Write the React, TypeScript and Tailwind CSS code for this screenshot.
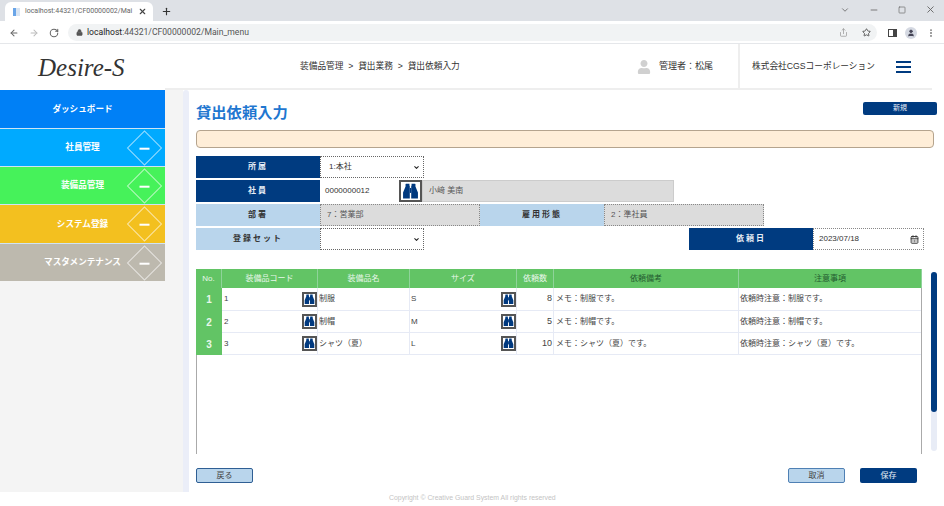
import React from 'react';
import { ArrowLeft, ArrowRight, ChevronDown, Lock, Minus, Plus, RotateCw, Share, Star, Square, X, MoreVertical, User, CalendarDays } from 'lucide-react';
import { FaUser } from 'react-icons/fa';

const font = "font-['Liberation_Sans','Noto_Sans_CJK_JP',sans-serif]";

const menus = [
  { label: 'ダッシュボード', color: 'bg-[#0080f6]', h: 'h-[38px]', toggle: false },
  { label: '社員管理', color: 'bg-[#00aaff]', h: 'h-[37px]', toggle: true },
  { label: '装備品管理', color: 'bg-[#46f25a]', h: 'h-[37px]', toggle: true },
  { label: 'システム登録', color: 'bg-[#f3c01f]', h: 'h-[38px]', toggle: true },
  { label: 'マスタメンテナンス', color: 'bg-[#bdb9ae]', h: 'h-[37px]', toggle: true },
];

const rows = [
  { no: 1, code: '1', name: '制服', size: 'S', qty: 8, memo: 'メモ：制服です。', note: '依頼時注意：制服です。', h: 'h-[23px]' },
  { no: 2, code: '2', name: '制帽', size: 'M', qty: 5, memo: 'メモ：制帽です。', note: '依頼時注意：制帽です。', h: 'h-[22px]' },
  { no: 3, code: '3', name: 'シャツ（夏）', size: 'L', qty: 10, memo: 'メモ：シャツ（夏）です。', note: '依頼時注意：シャツ（夏）です。', h: 'h-[22px]' },
];

const Finder = ({ large = false }: { large?: boolean }) => (
  <span className={`flex shrink-0 items-center justify-center border-2 border-[#555] bg-white text-[#00397f] ${large ? 'h-[22px] w-[23px]' : 'h-[15px] w-[15px]'}`}>
    <svg viewBox="0 0 24 24" width={large ? 17 : 11} height={large ? 17 : 11} fill="currentColor">
      <path d="M6 1h4.5v3H11v18H1.5V13.5L5 5V1.5z" />
      <path d="M18 1h-4.5v3H13v18h9.5V13.5L19 5V1.5z" />
      <rect x="11" y="7" width="2" height="7" />
    </svg>
  </span>
);

const Label = ({ text, dark = false }: { text: string; dark?: boolean }) => (
  <div className={`flex h-[22px] w-[124px] shrink-0 items-center justify-center text-[8px] font-bold tracking-[2px] ${dark ? 'bg-[#003b80] text-[#e8eef6]' : 'bg-[#b9d5ec] text-[#333]'}`}>
    {text}
  </div>
);

const SelectBox = ({ value }: { value?: string }) => (
  <div className="flex h-[22px] w-[104px] items-center justify-between border border-dotted border-[#666] bg-white pl-[8px] pr-[3px] text-[8px] text-[#333]">
    <span>{value}</span>
    <ChevronDown size={7} strokeWidth={3.5} className="text-[#222]" />
  </div>
);

const Gray = ({ text, w }: { text: string; w: string }) => (
  <div className={`flex h-[22px] ${w} items-center border border-dotted border-[#888] bg-[#dcdcdc] pl-[6px] text-[8px] text-[#555]`}>{text}</div>
);

const Th = ({ w, text, dark = false }: { w: string; text: string; dark?: boolean }) => (
  <div className={`flex ${w} shrink-0 items-center justify-center border-r border-[#8fd39a] text-[8px] ${dark ? 'text-[#245c30]' : 'text-[#e8f7ea]'}`}>{text}</div>
);

const App = () => {
  return (
    <div className={`${font} flex h-[506px] w-[944px] flex-col overflow-hidden bg-white`}>
      {/* browser chrome */}
      <div className="flex h-[21px] items-end bg-[#dee1e6] pl-[5px] text-[#555]">
        <div className="flex h-[19px] w-[148px] items-center gap-[5px] rounded-t-[6px] bg-white pl-[8px] pr-[6px] text-[7px] text-[#666]">
          <span className="h-[8px] w-[7px] shrink-0 border-l-[3px] border-[#6aa5e8] bg-[#d9e5f3]" />
          <span className="flex-1 whitespace-nowrap font-['Roboto',sans-serif]">localhost:44321/CF00000002/Mai</span>
          <X size={9} strokeWidth={3} className="shrink-0 text-[#444]" />
        </div>
        <Plus size={11} strokeWidth={2.5} className="mb-[4px] ml-[8px] text-[#333]" />
        <div className="mb-[6px] ml-auto flex items-center gap-[19px] pr-[8px] text-[#666]">
          <ChevronDown size={10} />
          <Minus size={10} />
          <Square size={8} strokeWidth={2} />
          <X size={11} />
        </div>
      </div>
      <div className="flex h-[23px] items-center border-b border-[#e5e7ea] pl-[9px] pr-[8px] pt-[1px] text-[#666]">
        <ArrowLeft size={10} strokeWidth={2.5} />
        <ArrowRight size={10} strokeWidth={2.5} className="ml-[10px] text-[#bbb]" />
        <RotateCw size={10} strokeWidth={2.5} className="ml-[10px]" />
        <div className="ml-[9px] flex h-[17px] flex-1 items-center gap-[4px] rounded-full bg-[#f1f3f4] pl-[8px] pr-[6px] font-['Roboto',sans-serif] text-[8.6px] text-[#555]">
          <Lock size={7} fill="#555" />
          <span><span className="text-[#222]">localhost</span>:44321/CF00000002/Main_menu</span>
          <Share size={9} className="ml-auto text-[#999]" />
          <Star size={9} strokeWidth={2.5} className="ml-[10px] text-[#555]" />
        </div>
        <div className="ml-[11px] h-[8px] w-[9px] border border-r-[4px] border-[#444]" />
        <span className="ml-[8px] flex h-[12px] w-[12px] items-center justify-center rounded-full bg-[#d5d9e2]">
          <User size={8} fill="#445" className="text-[#445]" />
        </span>
        <MoreVertical size={10} strokeWidth={2.5} className="ml-[9px] text-[#777]" />
      </div>

      {/* header */}
      <div className="flex h-[46px] items-stretch text-[8.7px] text-[#333]">
        <div className="flex w-[165px] items-center pl-[38px] font-['Liberation_Serif',serif] text-[25px] italic leading-none text-[#333]">
          Desire-S
        </div>
        <div className="flex flex-1 items-center border-b-2 border-[#eeeeee] pl-[135px] pt-[2px]">
          <span className="w-[337px] whitespace-nowrap">装備品管理 &nbsp;&gt;&nbsp; 貸出業務 &nbsp;&gt;&nbsp; 貸出依頼入力</span>
          <FaUser size={14} className="mr-[8px] text-[#d0d0d0]" />
          <span className="text-[9px]">管理者：松尾</span>
        </div>
        <div className="mr-[12px] flex w-[194px] items-center border-b-2 border-l-2 border-[#eeeeee] pl-[12px] pt-[2px]">
          <span className="w-[144px] whitespace-nowrap">株式会社CGSコーポレーション</span>
          <span className="flex w-[15px] flex-col gap-[3px]">
            <span className="h-[2px] bg-[#003b80]" />
            <span className="h-[2px] bg-[#003b80]" />
            <span className="h-[2px] bg-[#003b80]" />
          </span>
        </div>
      </div>

      <div className="flex h-[403px] items-start">
        {/* sidebar */}
        <div className="h-[402px] w-[183px] bg-[#f4f4f4]">
          <div className="flex w-[165px] flex-col gap-[1px] bg-[#cfe3f5]">
            {menus.map((m) => (
              <div key={m.label} className={`relative flex ${m.h} items-center justify-center ${m.color} text-[8.6px] font-bold text-white`}>
                <span className="whitespace-nowrap">{m.label}</span>
                {m.toggle && (
                  <span className="absolute left-[132px] top-1/2 flex h-[25px] w-[25px] -translate-y-1/2 rotate-45 items-center justify-center border border-white/60">
                    <span className="h-[2px] w-[10px] -rotate-45 bg-white" />
                  </span>
                )}
              </div>
            ))}
          </div>
        </div>
        <div className="h-[402px] w-[6px] rounded-t-[3px] bg-[#ebeef8]" />

        {/* main */}
        <div className="flex-1 pl-[7px] pr-[7px] pt-[12px]">
          <div className="flex h-[21px] items-start justify-between">
            <h1 className="pt-[1px] text-[15.3px] font-bold leading-[20px] text-[#1f77d0]">貸出依頼入力</h1>
            <button className="h-[13px] w-[74px] rounded-[2px] bg-[#003b80] text-[7px] text-[#e8eef6]">新規</button>
          </div>
          <div className="mt-[7px] h-[18px] w-[738px] rounded-[4px] border border-[#b5a48e] bg-[#ffeed8]" />

          <div className="mt-[8px] flex flex-col gap-[2px]">
            <div className="flex">
              <Label text="所属" dark />
              <SelectBox value="1:本社" />
            </div>
            <div className="flex">
              <Label text="社員" dark />
              <div className="flex h-[22px] w-[79px] items-center bg-white pl-[5px] text-[8px] text-[#333]">0000000012</div>
              <Finder large />
              <div className="flex h-[22px] w-[252px] items-center border border-[#ccc] bg-[#dcdcdc] pl-[6px] text-[8px] text-[#555]">小﨑 美南</div>
            </div>
            <div className="flex">
              <Label text="部署" />
              <Gray text="7：営業部" w="w-[160px]" />
              <Label text="雇用形態" />
              <Gray text="2：準社員" w="w-[160px]" />
            </div>
            <div className="flex">
              <Label text="登録セット" />
              <SelectBox />
              <div className="ml-[265px] flex">
                <Label text="依頼日" dark />
                <div className="flex h-[22px] w-[111px] items-center justify-between border border-dotted border-[#888] bg-white pl-[5px] pr-[4px] text-[8px] text-[#333]">
                  2023/07/18
                  <CalendarDays size={9} strokeWidth={2.5} className="text-[#333]" />
                </div>
              </div>
            </div>
          </div>

          {/* table */}
          <div className="mt-[19px] flex items-start">
            <div className="h-[185px] w-[726px] border-x border-[#aaaaaa]">
              <div className="-mx-[1px] flex h-[19px] bg-[#62c465]">
                <Th w="w-[26px]" text="No." />
                <Th w="w-[96px]" text="装備品コード" />
                <Th w="w-[92px]" text="装備品名" />
                <Th w="w-[107px]" text="サイズ" />
                <Th w="w-[37px]" text="依頼数" />
                <Th w="w-[185px]" text="依頼備考" dark />
                <Th w="w-[183px]" text="注意事項" dark />
              </div>
              {rows.map((r) => (
                <div key={r.no} className={`-ml-[1px] flex ${r.h} border-b border-[#e6eaf5] text-[8px] text-[#444]`}>
                  <div className="-mb-[1px] flex w-[26px] shrink-0 items-center justify-center bg-[#62c465] text-[10px] font-bold text-[#e8f7ea]">{r.no}</div>
                  <div className="flex w-[96px] shrink-0 items-center justify-between border-r border-[#e6eaf5] pl-[2px]">
                    {r.code}
                    <Finder />
                  </div>
                  <div className="flex w-[92px] shrink-0 items-center border-r border-[#e6eaf5] pl-[1px]">{r.name}</div>
                  <div className="flex w-[107px] shrink-0 items-center justify-between border-r border-[#e6eaf5] pl-[1px]">
                    {r.size}
                    <Finder />
                  </div>
                  <div className="flex w-[37px] shrink-0 items-center justify-end border-r border-[#e6eaf5] pr-[1px] text-[9px]">{r.qty}</div>
                  <div className="flex w-[185px] shrink-0 items-center border-r border-[#e6eaf5] pl-[2px]">{r.memo}</div>
                  <div className="flex w-[182px] shrink-0 items-center pl-[1px]">{r.note}</div>
                </div>
              ))}
            </div>
            <div className="ml-[9px] mt-[3px] h-[179px] w-[6px] rounded-full bg-[#e8ecf6]">
              <div className="h-[140px] rounded-full bg-[#003b80]" />
            </div>
          </div>

          <div className="mt-[14px] flex w-[721px] items-center text-[8px]">
            <button className="h-[15px] w-[57px] rounded-[2px] border-[1.5px] border-[#2f5f94] bg-[#b9d5ec] text-[#444]">戻る</button>
            <button className="ml-auto h-[15px] w-[57px] rounded-[2px] border-[1.5px] border-[#4f80b4] bg-[#b9d5ec] text-[#444]">取消</button>
            <button className="ml-[15px] h-[15px] w-[57px] rounded-[2px] bg-[#003b80] text-[#e8eef6]">保存</button>
          </div>
        </div>
      </div>

      <div className="pl-[389px] text-[6.9px] leading-[10px] text-[#c4c4c4]">Copyright © Creative Guard System All rights reserved</div>
    </div>
  );
};

export default App;
